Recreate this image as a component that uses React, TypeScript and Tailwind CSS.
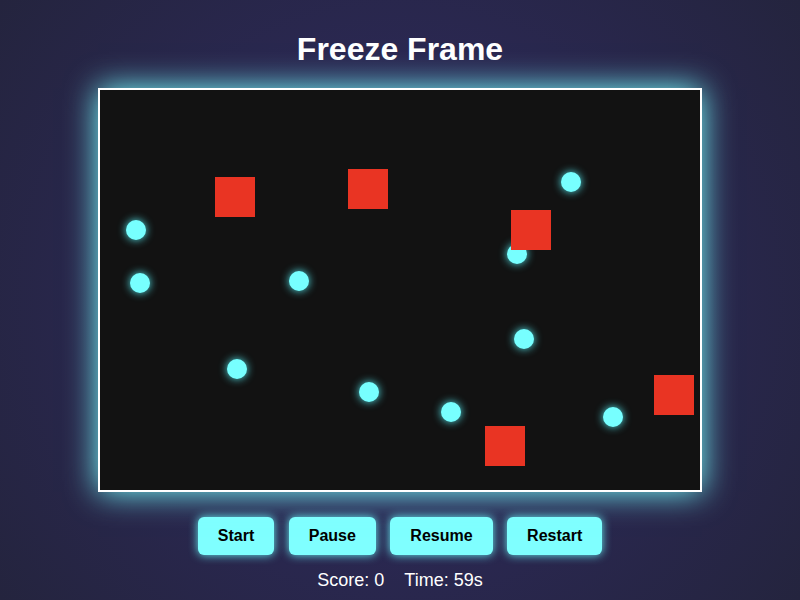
import React from 'react';

const dots = [
  [36, 140], [40, 193], [199, 191], [471, 92], [417, 164],
  [424, 249], [137, 279], [269, 302], [351, 322], [513, 327],
];

const blocks = [
  [115, 87], [248, 79], [411, 120], [385, 336], [554, 285],
];

const controls = ['Start', 'Pause', 'Resume', 'Restart'];

export default function App() {
  return (
    <div className="w-full h-screen overflow-hidden flex flex-col items-center pt-[31px] bg-[radial-gradient(circle_at_center,#302b63,#24243e)] font-['Liberation_Sans',Arial,sans-serif] text-white">
      <h1 className="text-[32px] leading-[37px] font-bold mb-[20px]">Freeze Frame</h1>

      {/* play field */}
      <div className="relative w-[604px] h-[404px] border-2 border-white bg-[#121212] shadow-[0_0_30px_#77ffff]">
        {dots.map(([x, y], i) => (
          <div
            key={`d${i}`}
            className="absolute w-5 h-5 rounded-full bg-[#77ffff] shadow-[0_0_8px_#55e8ee]"
            style={{ left: x - 10, top: y - 10 }}
          />
        ))}
        {blocks.map(([x, y], i) => (
          <div
            key={`b${i}`}
            className="absolute w-10 h-10 bg-[#e93423]"
            style={{ left: x, top: y }}
          />
        ))}
      </div>

      <div className="flex gap-[14.5px] mt-[25px]">
        {controls.map((label) => (
          <button
            key={label}
            className="px-5 py-2.5 text-base leading-[18px] font-bold text-black bg-[#7fffff] rounded-md shadow-[0_0_10px_#66eef5]"
          >
            {label}
          </button>
        ))}
      </div>

      <div className="flex gap-5 mt-[15px] text-[18px] leading-[21px]">
        <span>Score: 0</span>
        <span>Time: 59s</span>
      </div>
    </div>
  );
}
